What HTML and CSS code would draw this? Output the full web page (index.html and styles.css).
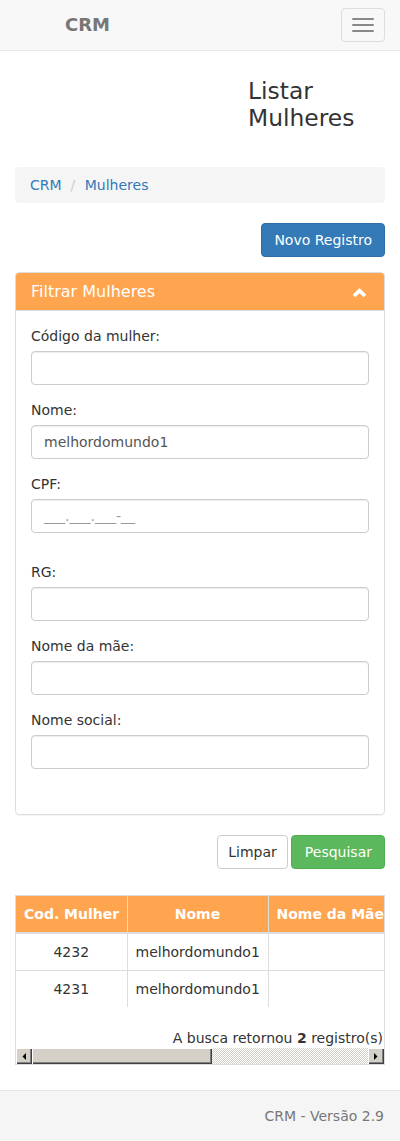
FILE: index.html
```html
<!DOCTYPE html>
<html lang="pt-BR">
<head>
<meta charset="utf-8">
<title>Listar Mulheres - CRM</title>
<link rel="stylesheet" href="styles.css">
</head>
<body>
<nav class="navbar">
  <a class="brand" href="#">CRM</a>
  <button class="navbar-toggle" type="button" aria-label="Menu">
    <span class="icon-bar"></span>
    <span class="icon-bar"></span>
    <span class="icon-bar"></span>
  </button>
</nav>

<main class="container">
  <div class="page-head">
    <h2 class="page-title">Listar Mulheres</h2>
  </div>

  <ol class="breadcrumb">
    <li><a href="#">CRM</a></li>
    <li><a href="#">Mulheres</a></li>
  </ol>

  <div class="actions actions-top">
    <button class="btn btn-primary" type="button">Novo Registro</button>
  </div>

  <section class="panel">
    <div class="panel-heading">
      <h3 class="panel-title">Filtrar Mulheres</h3>
      <svg class="chevron" width="15" height="11" viewBox="0 0 15 11" aria-hidden="true">
        <polyline points="2,9 7.5,3.6 13,9" fill="none" stroke="#fff" stroke-width="3.8" stroke-linejoin="miter" stroke-linecap="butt"/>
      </svg>
    </div>
    <div class="panel-body">
      <div class="form-group">
        <label>Código da mulher:</label>
        <input class="form-control" type="text">
      </div>
      <div class="form-group">
        <label>Nome:</label>
        <input class="form-control" type="text" value="melhordomundo1">
      </div>
      <div class="form-group form-group-wide">
        <label>CPF:</label>
        <input class="form-control" type="text" placeholder="___.___.___-__">
      </div>
      <div class="form-group">
        <label>RG:</label>
        <input class="form-control" type="text">
      </div>
      <div class="form-group">
        <label>Nome da mãe:</label>
        <input class="form-control" type="text">
      </div>
      <div class="form-group">
        <label>Nome social:</label>
        <input class="form-control" type="text">
      </div>
    </div>
  </section>

  <div class="actions actions-form">
    <button class="btn btn-default" type="button">Limpar</button>
    <button class="btn btn-success" type="button">Pesquisar</button>
  </div>

  <div class="table-responsive">
    <div class="table-viewport">
      <table class="table">
        <colgroup>
          <col class="col-cod">
          <col class="col-nome">
          <col class="col-mae">
          <col class="col-cpf">
          <col class="col-social">
        </colgroup>
        <thead>
          <tr>
            <th>Cod. Mulher</th>
            <th>Nome</th>
            <th>Nome da Mãe</th>
            <th>CPF</th>
            <th>Nome Social</th>
          </tr>
        </thead>
        <tbody>
          <tr>
            <td class="center">4232</td>
            <td>melhordomundo1</td>
            <td></td>
            <td></td>
            <td></td>
          </tr>
          <tr>
            <td class="center">4231</td>
            <td>melhordomundo1</td>
            <td></td>
            <td></td>
            <td></td>
          </tr>
        </tbody>
      </table>
      <div class="result-count">A busca retornou <strong>2</strong> registro(s)</div>
    </div>
    <div class="scrollbar" aria-hidden="true">
      <span class="sb-btn">
        <svg width="4" height="7" viewBox="0 0 4 7"><polygon points="4,0 4,7 0.5,3.5" fill="#000"/></svg>
      </span>
      <span class="sb-thumb"></span>
      <span class="sb-track"></span>
      <span class="sb-btn">
        <svg width="4" height="7" viewBox="0 0 4 7"><polygon points="0,0 0,7 3.5,3.5" fill="#000"/></svg>
      </span>
    </div>
  </div>
</main>

<footer class="footer">CRM - Versão 2.9</footer>
</body>
</html>
```

FILE: styles.css
```css
* { box-sizing: border-box; }

html, body {
  margin: 0;
  padding: 0;
}

body {
  font-family: "DejaVu Sans", Verdana, sans-serif;
  font-size: 14px;
  line-height: 20px;
  color: #333;
  background: #fff;
}

a { color: #337ab7; text-decoration: none; }

/* Navbar */
.navbar {
  height: 51px;
  background: #f8f8f8;
  border-bottom: 1px solid #e7e7e7;
  display: flex;
  align-items: center;
  justify-content: space-between;
  padding: 0 15px 0 65px;
}

.brand {
  font-size: 18px;
  font-weight: bold;
  color: #777;
  line-height: 20px;
  margin-top: -1px;
}

.navbar-toggle {
  width: 44px;
  height: 34px;
  border: 1px solid #ddd;
  border-radius: 4px;
  background: transparent;
  padding: 0;
  display: flex;
  flex-direction: column;
  align-items: center;
  justify-content: center;
  gap: 4px;
  margin-top: -1px;
}

.icon-bar {
  display: block;
  width: 22px;
  height: 2px;
  border-radius: 1px;
  background: #888;
}

/* Container */
.container {
  padding: 0 15px;
}

.page-head {
  padding-left: 233px;
  padding-top: 27px;
}

.page-title {
  margin: 0;
  font-size: 23.4px;
  font-weight: normal;
  line-height: 27px;
  color: #333;
}

/* Breadcrumb */
.breadcrumb {
  list-style: none;
  margin: 35px 0 20px;
  padding: 8px 15px;
  background: #f5f5f5;
  border-radius: 4px;
  display: flex;
  gap: 4px;
}

.breadcrumb li + li::before {
  content: "/\00a0";
  padding: 0 5px;
  color: #ccc;
}

/* Buttons */
.actions {
  display: flex;
  justify-content: flex-end;
  gap: 3px;
}

.actions-top { margin-bottom: 15px; }
.actions-form { margin: 20px 0 26px; }

.btn {
  font-family: inherit;
  font-size: 14px;
  line-height: 20px;
  padding: 6px 12px;
  border: 1px solid transparent;
  border-radius: 4px;
  height: 34px;
  cursor: pointer;
}

.btn-primary {
  background: #337ab7;
  border-color: #2e6da4;
  color: #fff;
}

.btn-default {
  background: #fff;
  border-color: #ccc;
  color: #333;
  padding: 6px 10px;
}

.btn-success {
  background: #5cb85c;
  border-color: #4cae4c;
  color: #fff;
  padding: 6px 12px 6px 13px;
}

/* Panel */
.panel {
  border: 1px solid #ddd;
  border-radius: 4px;
  overflow: hidden;
  box-shadow: 0 1px 1px rgba(0,0,0,.05);
}

.panel-heading {
  height: 38px;
  background: #ffa54f;
  border-bottom: 1px solid #ddd;
  padding: 0 17px 0 15px;
  display: flex;
  align-items: center;
  justify-content: space-between;
}

.panel-title {
  margin: 0;
  font-size: 16px;
  font-weight: normal;
  line-height: 18px;
  color: #fff;
}

.chevron {
  display: block;
  margin-top: 2px;
}

.panel-body {
  padding: 15px 15px 30px;
}

.form-group {
  margin-bottom: 15px;
}

.form-group-wide {
  margin-bottom: 29px;
}

.form-group label {
  display: block;
  margin-bottom: 5px;
  font-weight: normal;
  line-height: 20px;
}

.form-control {
  display: block;
  width: 100%;
  height: 34px;
  padding: 6px 12px;
  font-family: inherit;
  font-size: 14px;
  line-height: 20px;
  color: #555;
  background: #fff;
  border: 1px solid #ccc;
  border-radius: 4px;
  box-shadow: inset 0 1px 1px rgba(0,0,0,.075);
}

.form-control::placeholder {
  color: #999;
}

/* Table */
.table-responsive {
  border: 1px solid #ddd;
  margin-bottom: 25px;
}

.table-viewport {
  overflow: hidden;
}

.table {
  width: 687px;
  table-layout: fixed;
  border-collapse: collapse;
  margin-bottom: 21px;
}

.col-cod { width: 111px; }
.col-nome { width: 141px; }
.col-mae { width: 124px; }
.col-cpf { width: 156px; }
.col-social { width: 155px; }

.table th,
.table td {
  padding: 8px;
  line-height: 20px;
  border: 1px solid #ddd;
  white-space: nowrap;
  overflow: hidden;
}

.table thead tr th { border-top: 0; border-bottom-width: 2px; }
.table tr > :first-child { border-left: 0; }
.table tbody tr:last-child td { border-bottom: 0; }

.table th {
  background: #ffa54f;
  color: #fff;
  font-weight: bold;
  text-align: center;
}

.table td { text-align: left; }
.table td.center { text-align: center; }

.result-count {
  text-align: right;
  padding-right: 1px;
  line-height: 20px;
  white-space: nowrap;
}

/* Classic scrollbar */
.scrollbar {
  display: flex;
  height: 16px;
}

.sb-btn {
  width: 16px;
  flex: none;
  display: flex;
  align-items: center;
  justify-content: center;
  background: #d4d0c8;
  box-shadow: inset 1px 1px 0 #fff, inset -1px -1px 0 #404040, inset -2px -2px 0 #808080;
}

.sb-btn svg { display: block; }

.sb-thumb {
  width: 180px;
  flex: none;
  background: #d4d0c8;
  box-shadow: inset 1px 1px 0 #fff, inset -1px -1px 0 #404040, inset -2px -2px 0 #808080;
}

.sb-track {
  flex: 1;
  background-color: #fff;
  background-image: repeating-conic-gradient(#d4d0c8 0 25%, #fff 0 50%);
  background-size: 2px 2px;
}

/* Footer */
.footer {
  background: #f5f5f5;
  border-top: 1px solid #e5e5e5;
  height: 51px;
  padding: 15px 16px 0 15px;
  text-align: right;
  color: #777;
  line-height: 20px;
}
```
